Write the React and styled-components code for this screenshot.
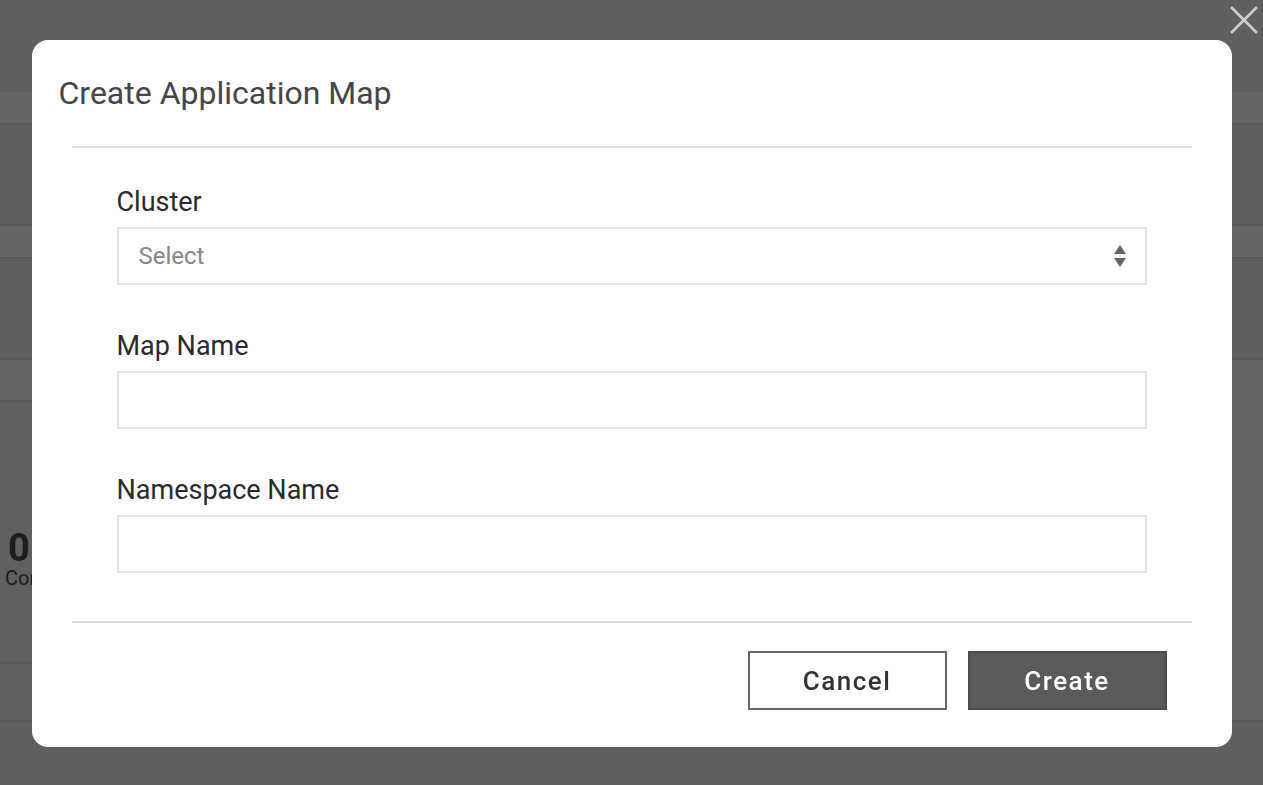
import React from "react"
import styled, { createGlobalStyle } from "styled-components"

const GlobalStyle = createGlobalStyle`
  html, body {
    margin: 0;
    padding: 0;
    height: 100%;
    overflow: hidden;
  }
  body {
    font-family: Roboto, "Liberation Sans", sans-serif;
  }
`

// dimmed page behind the modal
const Page = styled.div`
  height: 785px;
  display: flex;
  flex-direction: column;
  background: #5f5f5f;
`

const Band = styled.div`
  height: ${p => p.h}px;
  flex-shrink: 0;
  background: ${p => (p.light ? "#656565" : "#5f5f5f")};
  border-bottom: ${p => (p.line ? "2px solid #585858" : "none")};
  box-sizing: border-box;
`

const StatRow = styled.div`
  height: 362px;
  flex-shrink: 0;
  display: flex;
  background: #646464;
  border-bottom: 2px solid #585858;
  box-sizing: border-box;
`

const StatPanel = styled.div`
  width: 600px;
  display: flex;
  flex-direction: column;
  background: #606060;
`

const StatStripe = styled.div`
  height: 40px;
  background: #646464;
  border-bottom: 2px solid #595959;
`

const StatBody = styled.div`
  height: 262px;
  padding-left: 8px;
  padding-top: 128px;
  box-sizing: border-box;
  border-bottom: 2px solid #595959;
  color: #1c1c1c;
`

const StatValue = styled.div`
  font-size: 38px;
  font-weight: 700;
  line-height: 36px;
`

const StatLabel = styled.div`
  font-size: 20px;
  line-height: 24px;
  margin-left: -3px;
`

const Overlay = styled.div`
  position: fixed;
  inset: 0;
  display: flex;
  justify-content: center;
  align-items: flex-start;
  padding-top: 40px;
`

const CloseButton = styled.button`
  position: absolute;
  top: 5px;
  right: 4px;
  width: 30px;
  height: 30px;
  padding: 0;
  border: none;
  background: transparent;
  cursor: pointer;
`

const Modal = styled.div`
  width: 1200px;
  height: 707px;
  background: #fff;
  border-radius: 16px;
  display: flex;
  flex-direction: column;
  box-sizing: border-box;
`

const Header = styled.div`
  height: 106px;
  padding: 0 27px;
  display: flex;
  align-items: center;
`

const Title = styled.h2`
  margin: 0;
  font-size: 32px;
  font-weight: 400;
  color: #454545;
  line-height: 38px;
`

const Divider = styled.hr`
  margin: 0 40px;
  border: none;
  border-top: 2px solid #dedede;
`

const Body = styled.div`
  padding: 38px 85px 0;
  height: 473px;
  box-sizing: border-box;
  display: flex;
  flex-direction: column;
  gap: 45px;
`

const Field = styled.div`
  display: flex;
  flex-direction: column;
  gap: 9px;
`

const Label = styled.label`
  font-size: 27px;
  line-height: 32px;
  color: #2a2a2a;
`

const InputBox = styled.div`
  height: 58px;
  border: 2px solid #e4e4e4;
  box-sizing: border-box;
  display: flex;
  align-items: center;
  padding: 0 18px 0 20px;
`

const TextInput = styled.input`
  border: none;
  outline: none;
  width: 100%;
  font-family: inherit;
  font-size: 24px;
  color: #333;
  background: transparent;
`

const Placeholder = styled.span`
  flex: 1;
  font-size: 24px;
  color: #878787;
`

const Footer = styled.div`
  flex: 1;
  display: flex;
  justify-content: flex-end;
  align-items: flex-start;
  gap: 21px;
  padding: 28px 65px 0;
`

const Button = styled.button`
  width: 199px;
  height: 59px;
  font-family: inherit;
  font-size: 26px;
  font-weight: 500;
  letter-spacing: 1.5px;
  cursor: pointer;
  box-sizing: border-box;
  border: 2px solid ${p => (p.primary ? "#4b4b4b" : "#666")};
  background: ${p => (p.primary ? "#5a5a5a" : "#fff")};
  color: ${p => (p.primary ? "#fff" : "#333")};
`

const SelectArrows = () => (
  <svg width="14" height="24" viewBox="0 0 14 24">
    <path d="M7 1 L13 10 L1 10 Z" fill="#666" />
    <path d="M1 14 L13 14 L7 23 Z" fill="#666" />
  </svg>
)

const CloseIcon = () => (
  <svg width="30" height="30" viewBox="0 0 30 30">
    <path d="M2 2 L28 28 M28 2 L2 28" stroke="#cfcfcf" strokeWidth="2.5" fill="none" />
  </svg>
)

const App = () => (
  <>
    <GlobalStyle />
    <Page>
      <Band h={92} />
      <Band h={33} light line />
      <Band h={101} line />
      <Band h={33} light line />
      <Band h={101} line />
      <StatRow>
        <StatPanel>
          <StatStripe />
          <StatBody>
            <StatValue>0</StatValue>
            <StatLabel>Containers</StatLabel>
          </StatBody>
        </StatPanel>
      </StatRow>
    </Page>
    <Overlay>
      <CloseButton aria-label="Close"><CloseIcon /></CloseButton>
      <Modal>
        <Header>
          <Title>Create Application Map</Title>
        </Header>
        <Divider />
        <Body>
          <Field>
            <Label>Cluster</Label>
            <InputBox>
              <Placeholder>Select</Placeholder>
              <SelectArrows />
            </InputBox>
          </Field>
          <Field>
            <Label>Map Name</Label>
            <InputBox><TextInput /></InputBox>
          </Field>
          <Field>
            <Label>Namespace Name</Label>
            <InputBox><TextInput /></InputBox>
          </Field>
        </Body>
        <Divider />
        <Footer>
          <Button>Cancel</Button>
          <Button primary>Create</Button>
        </Footer>
      </Modal>
    </Overlay>
  </>
)

export default App
